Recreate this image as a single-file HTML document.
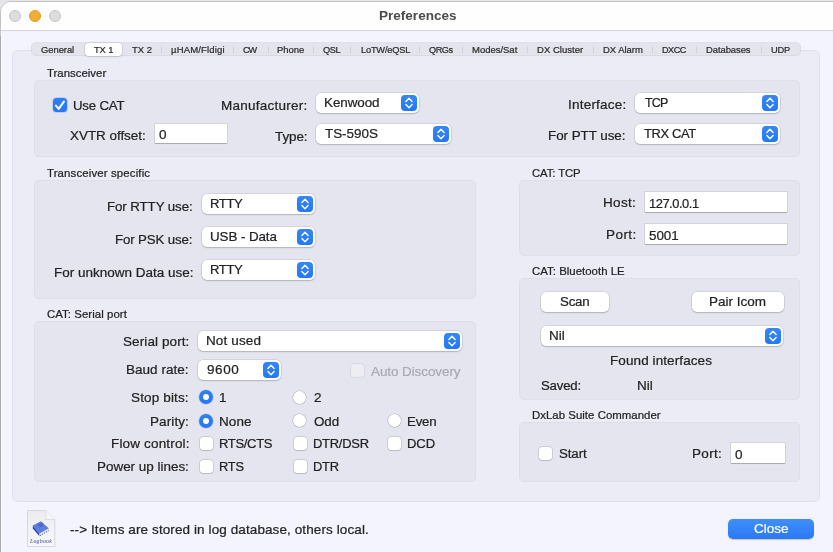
<!DOCTYPE html>
<html><head><meta charset="utf-8">
<style>
*{box-sizing:border-box;margin:0;padding:0}
html,body{width:833px;height:552px;overflow:hidden;background:#e6e6e8}
body{font-family:"Liberation Sans",sans-serif;color:#222222;position:relative}
.t{position:absolute;white-space:nowrap;line-height:1;will-change:transform;-webkit-text-stroke:0.22px currentColor}
.s{position:absolute}
#win{position:absolute;left:0;top:1px;width:850px;height:570px;background:#f4f4fe;border:1px solid #c3c3c6;border-top-left-radius:11px;overflow:hidden;box-shadow:inset 1px 0 0 rgba(255,255,255,.7)}
#title{position:absolute;left:0;top:0;width:100%;height:29px;background:#fefefe;border-bottom:1px solid #d5d5da}
.tl{position:absolute;top:9.5px;width:12px;height:12px;border-radius:50%;background:#dddddf;border:1px solid #c6c6c8}
#tabbox{position:absolute;left:12px;top:50px;width:808px;height:452px;background:#ececf6;border:1px solid #e0e0ea;border-radius:6px}
#tabbar{position:absolute;left:31px;top:42px;width:770px;height:14.3px;background:#e4e4ec;border:1px solid #dadae2;border-top-color:#e0e0e8;border-radius:5px}
.sep{position:absolute;top:46px;width:1px;height:7px;background:#d2d2da}
#seltab{position:absolute;left:84.7px;top:43px;width:37.4px;height:13.2px;background:#fff;border-radius:3.5px;box-shadow:0 0 0 0.5px rgba(0,0,0,.08),0 0.5px 1.5px rgba(0,0,0,.25)}
.grp{position:absolute;background:#e5e5ef;border:1px solid #dedee8;border-radius:5px}
.pop{position:absolute;height:20px;background:#fff;border-radius:5px;box-shadow:0 0 0 0.5px rgba(0,0,0,.14),0 1px 1.5px rgba(0,0,0,.16)}
.stp{position:absolute;width:16px;height:16px;border-radius:4px;background:linear-gradient(#3587f8,#2478f4)}
.stp svg{position:absolute;left:0;top:0}
.fld{position:absolute;height:20px;background:#fff;box-shadow:0 0 0 0.6px rgba(0,0,0,.13),0 0.8px 0.6px rgba(0,0,0,.2)}
.cb{position:absolute;width:13px;height:13px;background:#fff;border-radius:3px;box-shadow:0 0 0 0.5px rgba(0,0,0,.2),0 0.5px 1px rgba(0,0,0,.1)}
.rd{position:absolute;width:13px;height:13px;background:#fff;border-radius:50%;box-shadow:0 0 0 0.5px rgba(0,0,0,.2),0 0.5px 1px rgba(0,0,0,.1)}
.rd.on{width:14px;height:14px;background:linear-gradient(#2f80f7,#2577f3);box-shadow:0 0 0 0.5px rgba(0,60,200,.25)}
.rd.on::after{content:"";position:absolute;left:3.75px;top:3.75px;width:6.5px;height:6.5px;border-radius:50%;background:#fff}
.btn{position:absolute;height:20px;background:#fff;border-radius:5px;box-shadow:0 0 0 0.5px rgba(0,0,0,.14),0 1px 1.5px rgba(0,0,0,.16)}
</style></head><body>
<div id="win"><div id="title"></div></div>
<div class="s" style="left:0;top:36px;width:1px;height:516px;background:#a6a8b2"></div>
<div class="tl" style="left:9px"></div>
<div class="tl" style="left:29px;background:#f5ae34;border-color:#de9c2a"></div>
<div class="tl" style="left:49px"></div>
<div id="tabbox"></div>
<div id="tabbar"></div>
<div class="sep" style="left:161px"></div>
<div class="sep" style="left:233px"></div>
<div class="sep" style="left:268px"></div>
<div class="sep" style="left:313px"></div>
<div class="sep" style="left:350px"></div>
<div class="sep" style="left:419px"></div>
<div class="sep" style="left:462px"></div>
<div class="sep" style="left:527px"></div>
<div class="sep" style="left:593px"></div>
<div class="sep" style="left:652px"></div>
<div class="sep" style="left:696px"></div>
<div class="sep" style="left:761px"></div>
<div id="seltab"></div>
<div class="grp" style="left:34px;top:80px;width:766px;height:77px"></div>
<div class="grp" style="left:34px;top:180px;width:442px;height:119px"></div>
<div class="grp" style="left:34px;top:321px;width:442px;height:161px"></div>
<div class="grp" style="left:519px;top:180px;width:281px;height:76px"></div>
<div class="grp" style="left:519px;top:278px;width:281px;height:121.5px"></div>
<div class="grp" style="left:519px;top:422px;width:281px;height:60px"></div>
<div class="pop" style="left:316px;top:93px;width:102.80000000000001px;height:20px"><div class="stp" style="right:2px;top:2px"><svg width="16" height="16" viewBox="0 0 16 16"><path d="M4.9 6.5 L8 3.3 L11.1 6.5 M4.9 9.5 L8 12.7 L11.1 9.5" fill="none" stroke="#fff" stroke-width="1.4" stroke-linecap="round" stroke-linejoin="round"/></svg></div></div>
<div class="pop" style="left:316px;top:124px;width:135px;height:20px"><div class="stp" style="right:2px;top:2px"><svg width="16" height="16" viewBox="0 0 16 16"><path d="M4.9 6.5 L8 3.3 L11.1 6.5 M4.9 9.5 L8 12.7 L11.1 9.5" fill="none" stroke="#fff" stroke-width="1.4" stroke-linecap="round" stroke-linejoin="round"/></svg></div></div>
<div class="pop" style="left:635px;top:93px;width:144.5px;height:20px"><div class="stp" style="right:2px;top:2px"><svg width="16" height="16" viewBox="0 0 16 16"><path d="M4.9 6.5 L8 3.3 L11.1 6.5 M4.9 9.5 L8 12.7 L11.1 9.5" fill="none" stroke="#fff" stroke-width="1.4" stroke-linecap="round" stroke-linejoin="round"/></svg></div></div>
<div class="pop" style="left:635px;top:124px;width:144.5px;height:20px"><div class="stp" style="right:2px;top:2px"><svg width="16" height="16" viewBox="0 0 16 16"><path d="M4.9 6.5 L8 3.3 L11.1 6.5 M4.9 9.5 L8 12.7 L11.1 9.5" fill="none" stroke="#fff" stroke-width="1.4" stroke-linecap="round" stroke-linejoin="round"/></svg></div></div>
<div class="pop" style="left:202px;top:194px;width:112.5px;height:20px"><div class="stp" style="right:2px;top:2px"><svg width="16" height="16" viewBox="0 0 16 16"><path d="M4.9 6.5 L8 3.3 L11.1 6.5 M4.9 9.5 L8 12.7 L11.1 9.5" fill="none" stroke="#fff" stroke-width="1.4" stroke-linecap="round" stroke-linejoin="round"/></svg></div></div>
<div class="pop" style="left:202px;top:227px;width:112.5px;height:20px"><div class="stp" style="right:2px;top:2px"><svg width="16" height="16" viewBox="0 0 16 16"><path d="M4.9 6.5 L8 3.3 L11.1 6.5 M4.9 9.5 L8 12.7 L11.1 9.5" fill="none" stroke="#fff" stroke-width="1.4" stroke-linecap="round" stroke-linejoin="round"/></svg></div></div>
<div class="pop" style="left:202px;top:260px;width:112.5px;height:20px"><div class="stp" style="right:2px;top:2px"><svg width="16" height="16" viewBox="0 0 16 16"><path d="M4.9 6.5 L8 3.3 L11.1 6.5 M4.9 9.5 L8 12.7 L11.1 9.5" fill="none" stroke="#fff" stroke-width="1.4" stroke-linecap="round" stroke-linejoin="round"/></svg></div></div>
<div class="pop" style="left:197.7px;top:331px;width:264.1px;height:20px"><div class="stp" style="right:2px;top:2px"><svg width="16" height="16" viewBox="0 0 16 16"><path d="M4.9 6.5 L8 3.3 L11.1 6.5 M4.9 9.5 L8 12.7 L11.1 9.5" fill="none" stroke="#fff" stroke-width="1.4" stroke-linecap="round" stroke-linejoin="round"/></svg></div></div>
<div class="pop" style="left:197.7px;top:360px;width:82.90000000000003px;height:20px"><div class="stp" style="right:2px;top:2px"><svg width="16" height="16" viewBox="0 0 16 16"><path d="M4.9 6.5 L8 3.3 L11.1 6.5 M4.9 9.5 L8 12.7 L11.1 9.5" fill="none" stroke="#fff" stroke-width="1.4" stroke-linecap="round" stroke-linejoin="round"/></svg></div></div>
<div class="pop" style="left:540.7px;top:326px;width:242.79999999999995px;height:20px"><div class="stp" style="right:2px;top:2px"><svg width="16" height="16" viewBox="0 0 16 16"><path d="M4.9 6.5 L8 3.3 L11.1 6.5 M4.9 9.5 L8 12.7 L11.1 9.5" fill="none" stroke="#fff" stroke-width="1.4" stroke-linecap="round" stroke-linejoin="round"/></svg></div></div>
<div class="fld" style="left:155px;top:123.6px;width:72.1px;height:19.700000000000017px"></div>
<div class="fld" style="left:644.7px;top:191.5px;width:142.0px;height:20.5px"></div>
<div class="fld" style="left:644.7px;top:223.7px;width:142.0px;height:20.30000000000001px"></div>
<div class="fld" style="left:730.8px;top:442.7px;width:54.5px;height:20.69999999999999px"></div>
<div class="cb" style="left:53px;top:98px;width:14px;height:14px;border-radius:3.5px;background:linear-gradient(#2f80f7,#2577f3);box-shadow:0 0 0 0.5px rgba(0,60,200,.3)"><svg width="14" height="14" viewBox="0 0 14 14" style="position:absolute;left:0;top:0"><path d="M2.9 7.6 L5.7 10.9 L10.9 3.6" fill="none" stroke="#fff" stroke-width="2" stroke-linecap="round" stroke-linejoin="round"/></svg></div>
<div class="cb" style="left:350.5px;top:364px;width:13px;height:13px;background:#eeedf4;box-shadow:0 0 0 0.5px rgba(0,0,0,.1)"></div>
<div class="cb" style="left:199.5px;top:436.5px"></div>
<div class="cb" style="left:293.5px;top:436.5px"></div>
<div class="cb" style="left:388px;top:436.5px"></div>
<div class="cb" style="left:199.5px;top:459.5px"></div>
<div class="cb" style="left:293.5px;top:459.5px"></div>
<div class="cb" style="left:538.6px;top:446.5px"></div>
<div class="rd on" style="left:199px;top:390px"></div>
<div class="rd" style="left:293.4px;top:390.6px"></div>
<div class="rd on" style="left:199px;top:414px"></div>
<div class="rd" style="left:293.4px;top:414.3px"></div>
<div class="rd" style="left:387.6px;top:414.3px"></div>
<div class="btn" style="left:540.7px;top:291.8px;width:68.5px;height:20.19999999999999px"></div>
<div class="btn" style="left:691.5px;top:291.8px;width:92.60000000000002px;height:20.19999999999999px"></div>
<div class="s" style="left:728px;top:519px;width:86px;height:20px;border-radius:5px;background:linear-gradient(#3f8ff9,#2b79f5);box-shadow:0 0.5px 1px rgba(0,0,0,.2)"></div>
<svg class="s" style="left:26px;top:509px;will-change:transform" width="31" height="39" viewBox="0 0 31 39">
<defs><linearGradient id="pg" x1="0" y1="0" x2="0" y2="1"><stop offset="0" stop-color="#ececef"/><stop offset="1" stop-color="#f8f8fa"/></linearGradient></defs>
<path d="M1.5 1.5 H19.8 L28.8 10.5 V37.5 H1.5 Z" fill="url(#pg)" stroke="#cfcfd4" stroke-width="0.8"/>
<path d="M19.8 1.5 L21 9.3 L28.8 10.5 Z" fill="#dcdce0"/>
<path d="M19.8 1.5 L19.8 10.5 L28.8 10.5" fill="#f6f6f8" stroke="#d0d0d4" stroke-width="0.6"/>
<path d="M6.8 16.6 L14.9 12.2 L23 19.4 L13.4 24.8 Z" fill="#5a7fe0"/>
<path d="M6.8 16.6 L13.4 24.8 L13.6 27.4 L6.8 19.4 Z" fill="#2c4bb0"/>
<path d="M13.4 24.8 L23 19.4 L23 22 L13.6 27.4 Z" fill="#ececf2"/>
<path d="M14.2 26.5 L22.6 21.6" stroke="#30304a" stroke-width="0.9" stroke-dasharray="1.1 1.1"/>
<path d="M12 16.5 L16.5 14.2 M13.5 18 L17.5 15.8" stroke="#2f3f90" stroke-width="0.7"/>
<text x="15" y="34" font-family="Liberation Serif" font-style="italic" font-size="5.8" fill="#34489a" text-anchor="middle" letter-spacing="0.25">Logbook</text>
</svg>
<span class="t" style="left:378.70px;top:9.00px;font-size:13.500px;letter-spacing:0.021px;font-weight:bold;-webkit-text-stroke:0;color:#4b4b4b">Preferences</span>
<span class="t" style="left:41.20px;top:45.00px;font-size:9.417px;letter-spacing:-0.046px;color:#2b2b2b">General</span>
<span class="t" style="left:94.00px;top:46.00px;font-size:9.360px;letter-spacing:-0.112px;color:#2b2b2b">TX 1</span>
<span class="t" style="left:132.40px;top:45.00px;font-size:9.481px;letter-spacing:-0.010px;color:#2b2b2b">TX 2</span>
<span class="t" style="left:170.90px;top:45.00px;font-size:9.500px;letter-spacing:0.169px;color:#2b2b2b">µHAM/Fldigi</span>
<span class="t" style="left:243.30px;top:46.00px;font-size:9.115px;letter-spacing:-0.979px;color:#2b2b2b">CW</span>
<span class="t" style="left:277.10px;top:45.00px;font-size:9.450px;letter-spacing:-0.035px;color:#2b2b2b">Phone</span>
<span class="t" style="left:323.20px;top:46.00px;font-size:9.210px;letter-spacing:-0.337px;color:#2b2b2b">QSL</span>
<span class="t" style="left:360.50px;top:46.00px;font-size:9.242px;letter-spacing:-0.184px;color:#2b2b2b">LoTW/eQSL</span>
<span class="t" style="left:429.20px;top:46.00px;font-size:9.111px;letter-spacing:-0.417px;color:#2b2b2b">QRGs</span>
<span class="t" style="left:472.40px;top:45.00px;font-size:9.482px;color:#2b2b2b">Modes/Sat</span>
<span class="t" style="left:537.30px;top:45.00px;font-size:9.500px;letter-spacing:0.026px;color:#2b2b2b">DX Cluster</span>
<span class="t" style="left:603.00px;top:45.00px;font-size:9.461px;letter-spacing:-0.024px;color:#2b2b2b">DX Alarm</span>
<span class="t" style="left:662.30px;top:46.00px;font-size:9.077px;letter-spacing:-0.478px;color:#2b2b2b">DXCC</span>
<span class="t" style="left:706.40px;top:45.00px;font-size:9.409px;letter-spacing:-0.050px;color:#2b2b2b">Databases</span>
<span class="t" style="left:771.40px;top:46.00px;font-size:9.300px;letter-spacing:-0.264px;color:#2b2b2b">UDP</span>
<span class="t" style="left:46.90px;top:68.00px;font-size:11.400px;letter-spacing:0.012px">Transceiver</span>
<span class="t" style="left:46.90px;top:168.00px;font-size:11.400px;letter-spacing:0.146px">Transceiver specific</span>
<span class="t" style="left:46.50px;top:309.00px;font-size:11.400px;letter-spacing:0.063px">CAT: Serial port</span>
<span class="t" style="left:531.80px;top:168.00px;font-size:11.297px;letter-spacing:-0.069px">CAT: TCP</span>
<span class="t" style="left:531.80px;top:266.00px;font-size:11.400px;letter-spacing:0.029px">CAT: Bluetooth LE</span>
<span class="t" style="left:531.60px;top:410.00px;font-size:11.400px;letter-spacing:0.035px">DxLab Suite Commander</span>
<span class="t" style="left:72.50px;top:99.00px;font-size:13.239px;letter-spacing:-0.177px">Use CAT</span>
<span class="t" style="left:69.80px;top:129.00px;font-size:13.453px;letter-spacing:-0.018px">XVTR offset:</span>
<span class="t" style="left:221.00px;top:99.00px;font-size:13.500px;letter-spacing:0.255px">Manufacturer:</span>
<span class="t" style="left:274.80px;top:130.00px;font-size:13.402px;letter-spacing:-0.057px">Type:</span>
<span class="t" style="left:323.50px;top:96.00px;font-size:13.415px;letter-spacing:-0.058px">Kenwood</span>
<span class="t" style="left:325.30px;top:127.00px;font-size:13.453px;letter-spacing:-0.028px">TS-590S</span>
<span class="t" style="left:567.80px;top:98.00px;font-size:13.500px;letter-spacing:0.219px">Interface:</span>
<span class="t" style="left:548.30px;top:129.00px;font-size:13.411px;letter-spacing:-0.045px">For PTT use:</span>
<span class="t" style="left:644.60px;top:97.00px;font-size:12.488px;letter-spacing:-0.760px">TCP</span>
<span class="t" style="left:643.70px;top:127.00px;font-size:12.988px;letter-spacing:-0.382px">TRX CAT</span>
<span class="t" style="left:158.50px;top:128.00px;font-size:13.500px">0</span>
<span class="t" style="left:107.00px;top:200.00px;font-size:13.318px;letter-spacing:-0.087px">For RTTY use:</span>
<span class="t" style="left:115.40px;top:233.00px;font-size:13.263px;letter-spacing:-0.119px">For PSK use:</span>
<span class="t" style="left:53.50px;top:266.00px;font-size:13.494px">For unknown Data use:</span>
<span class="t" style="left:209.50px;top:197.00px;font-size:13.097px;letter-spacing:-0.395px">RTTY</span>
<span class="t" style="left:209.50px;top:230.00px;font-size:13.374px;letter-spacing:-0.070px">USB - Data</span>
<span class="t" style="left:209.50px;top:263.00px;font-size:13.097px;letter-spacing:-0.395px">RTTY</span>
<span class="t" style="left:122.60px;top:335.00px;font-size:13.500px;letter-spacing:0.097px">Serial port:</span>
<span class="t" style="left:126.40px;top:363.00px;font-size:13.500px;letter-spacing:0.029px">Baud rate:</span>
<span class="t" style="left:131.40px;top:391.00px;font-size:13.500px;letter-spacing:0.141px">Stop bits:</span>
<span class="t" style="left:150.10px;top:415.00px;font-size:13.500px;letter-spacing:0.099px">Parity:</span>
<span class="t" style="left:110.50px;top:437.00px;font-size:13.500px;letter-spacing:0.161px">Flow control:</span>
<span class="t" style="left:97.10px;top:460.00px;font-size:13.467px;letter-spacing:-0.010px">Power up lines:</span>
<span class="t" style="left:205.50px;top:334.00px;font-size:13.500px;letter-spacing:0.125px">Not used</span>
<span class="t" style="left:206.50px;top:363.00px;font-size:13.500px;letter-spacing:0.559px">9600</span>
<span class="t" style="left:371.20px;top:365.00px;font-size:13.408px;letter-spacing:-0.042px;color:#a9a8b1">Auto Discovery</span>
<span class="t" style="left:218.60px;top:391.00px;font-size:13.500px">1</span>
<span class="t" style="left:313.50px;top:391.00px;font-size:13.500px">2</span>
<span class="t" style="left:218.60px;top:415.00px;font-size:13.500px;letter-spacing:0.078px">None</span>
<span class="t" style="left:313.50px;top:415.00px;font-size:13.416px;letter-spacing:-0.092px">Odd</span>
<span class="t" style="left:406.50px;top:415.00px;font-size:13.253px;letter-spacing:-0.211px">Even</span>
<span class="t" style="left:218.60px;top:437.00px;font-size:13.050px;letter-spacing:-0.346px">RTS/CTS</span>
<span class="t" style="left:312.50px;top:438.00px;font-size:12.971px;letter-spacing:-0.262px">DTR/DSR</span>
<span class="t" style="left:406.50px;top:437.00px;font-size:13.067px;letter-spacing:-0.072px">DCD</span>
<span class="t" style="left:218.60px;top:461.00px;font-size:12.869px;letter-spacing:-0.255px">RTS</span>
<span class="t" style="left:312.50px;top:461.00px;font-size:12.913px;letter-spacing:-0.252px">DTR</span>
<span class="t" style="left:603.40px;top:196.00px;font-size:13.500px;letter-spacing:0.310px">Host:</span>
<span class="t" style="left:605.90px;top:228.00px;font-size:13.500px;letter-spacing:0.435px">Port:</span>
<span class="t" style="left:648.50px;top:198.00px;font-size:12.883px;letter-spacing:-0.454px">127.0.0.1</span>
<span class="t" style="left:648.50px;top:229.00px;font-size:13.426px;letter-spacing:-0.056px">5001</span>
<span class="t" style="left:560.10px;top:295.00px;font-size:13.261px;letter-spacing:-0.211px">Scan</span>
<span class="t" style="left:708.90px;top:295.00px;font-size:13.500px">Pair Icom</span>
<span class="t" style="left:548.90px;top:329.00px;font-size:13.500px">Nil</span>
<span class="t" style="left:610.00px;top:354.00px;font-size:13.500px;letter-spacing:0.093px">Found interfaces</span>
<span class="t" style="left:540.70px;top:379.00px;font-size:13.206px;letter-spacing:-0.178px">Saved:</span>
<span class="t" style="left:636.60px;top:379.00px;font-size:13.500px">Nil</span>
<span class="t" style="left:558.70px;top:447.00px;font-size:13.321px;letter-spacing:-0.104px">Start</span>
<span class="t" style="left:692.40px;top:447.00px;font-size:13.500px;letter-spacing:0.310px">Port:</span>
<span class="t" style="left:734.90px;top:448.00px;font-size:13.500px">0</span>
<span class="t" style="left:69.80px;top:523.00px;font-size:13.500px;letter-spacing:0.099px">--&gt; Items are stored in log database, others local.</span>
<span class="t" style="left:754.00px;top:522.00px;font-size:13.499px;letter-spacing:0.006px;color:#ffffff">Close</span>
</body></html>
